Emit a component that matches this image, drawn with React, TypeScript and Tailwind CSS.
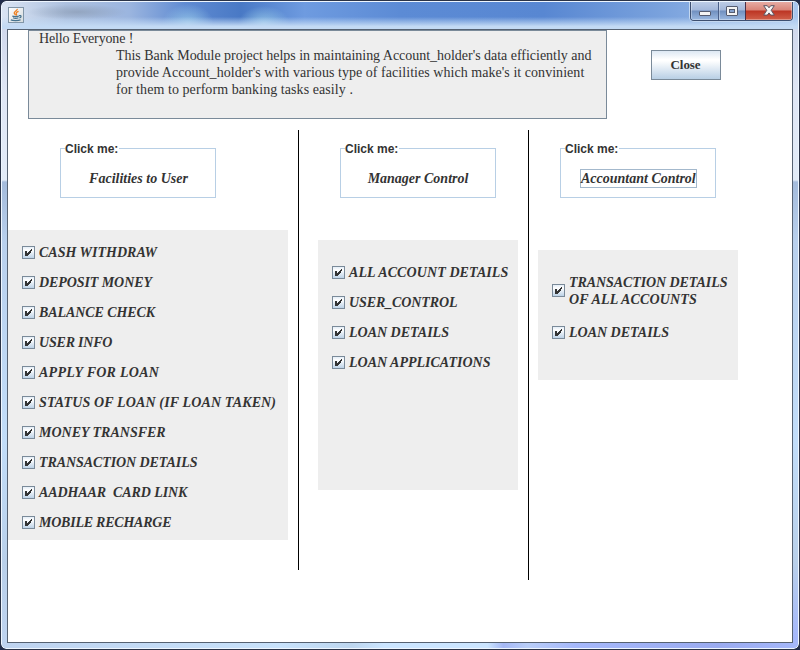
import type { ReactNode } from "react";

function JavaIcon() {
  return (
    <svg width="16" height="16" viewBox="0 0 16 16" className="block">
      <defs>
        <linearGradient id="tile" x1="0" y1="0" x2="1" y2="1">
          <stop offset="0" stopColor="#ffffff" />
          <stop offset="1" stopColor="#d3dadd" />
        </linearGradient>
      </defs>
      <rect x="0.5" y="0.5" width="15" height="15" fill="url(#tile)" stroke="#8196a8" />
      <path d="M9.3 1.8C9.6 3.5 6 4.4 6.2 6c.1 1 1.3 1.4 1.2 2.4M10.6 4.4C8.8 5 7.6 5.8 8.3 6.8c.5.7.4 1.2-.2 1.7" fill="none" stroke="#ee8122" strokeWidth="1.3" />
      <path d="M4.3 9c1 .7 5.5.7 6.6 0M5 10.8c1.2.6 4.2.6 5.4 0M11 8.7c2.7-.7 2.7 1.7.4 2.2M2.8 12.9c2 1 7.8 1 9.8-.2" fill="none" stroke="#47738f" strokeWidth="1.2" />
    </svg>
  );
}

function TitleBar() {
  return (
    <div className="flex h-[27px] justify-between pl-[6px] pr-[5px]">
      <div className="pt-[5px]">
        <JavaIcon />
      </div>
      <div className="-mt-px flex h-[20px] w-[103px] overflow-hidden rounded-b-[4px] border border-t-0 border-[#3d4f70] shadow-[0_0_0_1px_#c4d8f0]">
        <div className="flex w-[28px] items-center justify-center border-r border-[#4a5f88] bg-[linear-gradient(#c0cfe8_0%,#a3b7da_48%,#708fbf_52%,#9bb8e0_100%)] pt-[5px] shadow-[inset_1px_-1px_0_#ffffff55]">
          <div className="h-[5px] w-[12px] rounded-[1px] border border-[#555c70] bg-[#f4f4f4]" />
        </div>
        <div className="flex w-[27px] items-center justify-center border-r border-[#4a3048] bg-[linear-gradient(#c0cfe8_0%,#a3b7da_48%,#708fbf_52%,#9bb8e0_100%)] shadow-[inset_1px_-1px_0_#ffffff55]">
          <div className="flex h-[10px] w-[12px] items-center justify-center rounded-[1px] border border-[#555c70] bg-[#f4f4f4]">
            <div className="h-[4px] w-[6px] border border-[#555c70] bg-[#86a3cf]" />
          </div>
        </div>
        <div className="flex flex-1 items-center justify-center bg-[linear-gradient(#e8b0a8_0%,#d98478_48%,#bc3423_52%,#d0604a_100%)] shadow-[inset_-1px_-1px_0_#ffffff55]">
          <svg width="12" height="11" viewBox="0 0 12 11">
            <path d="M.7 .7h3.6L6 2.8 7.7.7h3.6L8.2 5.3l3.1 4.8H7.7L6 7.9l-1.7 2.2H.7l3.1-4.8z" fill="#f7f7f7" stroke="#5b5462" />
          </svg>
        </div>
      </div>
    </div>
  );
}

function CheckBox() {
  return (
    <svg width="13" height="13" viewBox="0 0 13 13" className="block shrink-0" shapeRendering="crispEdges">
      <defs>
        <linearGradient id="metal" x1="0" y1="0" x2="0" y2="1">
          <stop offset="0" stopColor="#dfeaf5" />
          <stop offset="0.3" stopColor="#ffffff" />
          <stop offset="1" stopColor="#b8cfe5" />
        </linearGradient>
      </defs>
      <rect x="0.5" y="0.5" width="12" height="12" fill="url(#metal)" stroke="#7a8a99" />
      <path d="M3 5h2v5H3zM5 7h1v2H5zM6 6h1v2H6zM7 5h1v2H7zM8 4h1v2H8zM9 3h1v2H9zM5 9h1v1H5zM6 8h1v1H6zM7 7h1v1H7zM8 6h1v1H8z" fill="#333333" />
    </svg>
  );
}

function Option({ children, className = "" }: { children: ReactNode; className?: string }) {
  return (
    <label className="flex min-h-[30px] items-center gap-[4px]">
      <CheckBox />
      <span className={`whitespace-pre font-bold italic leading-[17px] ${className}`}>{children}</span>
    </label>
  );
}

function ClickMe({ children }: { children: ReactNode }) {
  return (
    <fieldset className="h-[56px] w-[156px] border border-[#b8cfe5] pl-[4px]">
      <legend className="h-[13px] w-[54px] whitespace-nowrap bg-white font-['Liberation_Sans',sans-serif] text-[12px] font-bold leading-[15px]">
        Click me:
      </legend>
      <div className="-ml-[4px] mt-[14px] flex justify-center font-bold italic leading-[19px]">{children}</div>
    </fieldset>
  );
}

export default function App() {
  return (
    <div className="h-[650px] w-[800px] bg-[#202c4c] font-['Liberation_Serif',serif] text-[14px] text-[#333333]">
      <div className="h-full overflow-hidden rounded-[6px] border border-[#2a3347]">
        <div className="h-full overflow-hidden rounded-[5px] border border-[#eef6ff] bg-[linear-gradient(90deg,#bed3ef_0%,#c8e2fb_35%,#bdd6ef_44%,#cbe5ff_48%,#cbe5ff_61%,#a5b8f5_63%,#b9cef8_66%,#a5b8fb_72%,#9aabf0_90%,#a5b8fb_100%)]">
          <div className="h-full bg-[linear-gradient(180deg,#cbd3e8_0px,#dfe6f5_90px,#e2ebf7_178px,#a4bbdb_180px,#b9d0ed_240px,#c2ddf9_440px,#b9d0ea_560px,#c2ddf900_635px)]">
            <div className="bg-[linear-gradient(180deg,#ffffff00_55%,#c3daf4_90%),radial-gradient(ellipse_26px_20px_at_186px_22px,#9ed0ebcc_0%,#9ed0eb00_100%),radial-gradient(ellipse_26px_18px_at_262px_22px,#9ed0ebcc_0%,#9ed0eb00_100%),radial-gradient(ellipse_50px_8px_at_75px_10px,#8494ab99_0%,#8494ab00_100%),linear-gradient(90deg,#dae4f3_0%,#adc1df_8%,#9bb5df_16%,#608bd2_23%,#4979c5_30%,#6e9be0_38%,#5c8bd5_50%,#5887d2_68%,#7aa2dd_83%,#a9c7ee_100%)]">
              <TitleBar />
            </div>
            <div className="mx-[5px] h-[614px] w-[786px] border border-[#566272] bg-white">
              <div className="flex h-[100px] gap-[44px] pl-[20px]">
                <div className="h-[89px] w-[579px] border border-[#7a8a99] bg-[#eeeeee] pl-[10px] leading-[17px]">
                  <div className="-mt-px whitespace-pre tracking-[-0.14px]">Hello Everyone !</div>
                  <div className="whitespace-pre pl-[77px]">
                    <div className="tracking-[-0.024px]">This Bank Module project helps in maintaining Account_holder's data efficiently and</div>
                    <div className="tracking-[0.045px]">provide Account_holder's with various type of facilities which make's it convinient</div>
                    <div className="tracking-[0.07px]">for them to perform banking tasks easily .</div>
                  </div>
                </div>
                <button className="mt-[20px] h-[30px] w-[70px] border border-[#7a8a99] bg-[linear-gradient(#dde8f3_0%,#ffffff_30%,#ffffff_35%,#b8cfe5_100%)] pr-px text-[13px] font-bold tracking-[-0.1px]">
                  Close
                </button>
              </div>
              <div className="flex items-start">
                <div className="h-[440px] w-[291px] border-r border-black pt-[12px]">
                  <div className="pl-[52px]">
                    <ClickMe>
                      <span className="ml-px">Facilities to User</span>
                    </ClickMe>
                  </div>
                  <div className="mt-[32px] h-[310px] w-[280px] bg-[#eeeeee] pl-[14px] pt-[7px]">
                    <Option>CASH WITHDRAW</Option>
                    <Option className="tracking-[-0.08px]">DEPOSIT MONEY</Option>
                    <Option className="tracking-[-0.08px]">BALANCE CHECK</Option>
                    <Option className="tracking-[-0.2px]">USER INFO</Option>
                    <Option className="tracking-[0.27px]">APPLY FOR LOAN</Option>
                    <Option className="tracking-[0.13px]">STATUS OF LOAN (IF LOAN TAKEN)</Option>
                    <Option>MONEY TRANSFER</Option>
                    <Option className="tracking-[-0.08px]">TRANSACTION DETAILS</Option>
                    <Option className="tracking-[-0.08px]">{"AADHAAR  CARD LINK"}</Option>
                    <Option className="tracking-[-0.23px]">MOBILE RECHARGE</Option>
                  </div>
                </div>
                <div className="h-[450px] w-[230px] border-r border-black pt-[12px]">
                  <div className="pl-[41px]">
                    <ClickMe>Manager Control</ClickMe>
                  </div>
                  <div className="ml-[19px] mt-[42px] h-[250px] w-[200px] bg-[#eeeeee] pl-[14px] pt-[17px]">
                    <Option className="tracking-[0.09px]">ALL ACCOUNT DETAILS</Option>
                    <Option className="tracking-[-0.1px]">USER_CONTROL</Option>
                    <Option>LOAN DETAILS</Option>
                    <Option>LOAN APPLICATIONS</Option>
                  </div>
                </div>
                <div className="pl-[9px] pt-[12px]">
                  <div className="pl-[22px]">
                    <ClickMe>
                      <span className="ml-px w-[117px] whitespace-nowrap border border-[#a3b8cc] leading-[17px]">Accountant Control</span>
                    </ClickMe>
                  </div>
                  <div className="mt-[52px] h-[130px] w-[200px] bg-[#eeeeee] pl-[14px] pt-[23px]">
                    <Option className="-mb-px pt-px">
                      <span className="block tracking-[-0.08px]">TRANSACTION DETAILS</span>
                      <span className="block tracking-[0.14px]">OF ALL ACCOUNTS</span>
                    </Option>
                    <div className="h-[10px]" />
                    <Option>LOAN DETAILS</Option>
                  </div>
                </div>
              </div>
            </div>
          </div>
        </div>
      </div>
    </div>
  );
}
